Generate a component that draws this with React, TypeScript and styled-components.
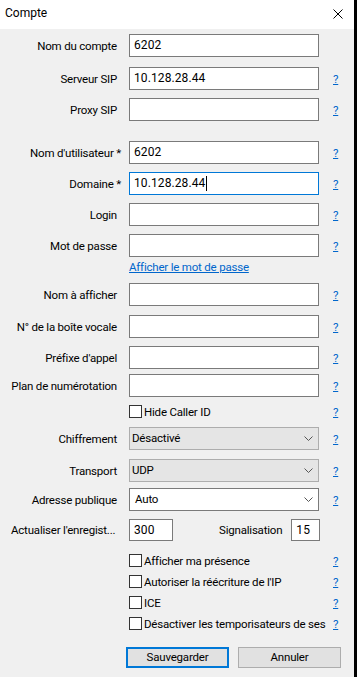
import React from 'react';
import styled, { createGlobalStyle } from 'styled-components';

const GlobalStyle = createGlobalStyle`
  html, body {
    margin: 0;
    padding: 0;
    background: #000;
  }
  body {
    font-family: 'Segoe UI', Roboto, 'Liberation Sans', sans-serif;
    font-size: 11.5px;
    letter-spacing: -0.2px;
    color: #000;
  }
`;

const Screen = styled.div`
  display: flex;
  height: 677px;
  background: #000;
`;

const Dialog = styled.div`
  width: 354px;
  display: flex;
  flex-direction: column;
  background: #f0f0f0;
`;

const TitleBar = styled.div`
  height: 29px;
  flex-shrink: 0;
  box-sizing: border-box;
  display: flex;
  align-items: flex-start;
  justify-content: space-between;
  padding: 5px 11px 0 5px;
  background: #fff;
  line-height: 16px;
  font-size: 12px;
  letter-spacing: 0;
`;

const CloseIcon = styled.svg`
  margin-top: 4px;
`;

const Body = styled.div`
  display: flex;
  flex-direction: column;
  padding-top: 5px;
`;

const Row = styled.div<{ $mt?: number; $h?: number }>`
  display: flex;
  align-items: center;
  height: ${(p) => p.$h ?? 23}px;
  margin-top: ${(p) => p.$mt ?? 0}px;
`;

const Label = styled.div<{ $req?: boolean }>`
  width: 129px;
  flex-shrink: 0;
  box-sizing: border-box;
  padding-right: ${(p) => (p.$req ? 8 : 12)}px;
  text-align: right;
  white-space: nowrap;
`;

const ShortLabel = styled.div`
  width: 129px;
  flex-shrink: 0;
  box-sizing: border-box;
  padding-left: 11px;
  white-space: nowrap;
`;

const TextBox = styled.div<{ $focus?: boolean; $w?: number }>`
  width: ${(p) => p.$w ?? 190}px;
  height: 100%;
  box-sizing: border-box;
  display: flex;
  align-items: center;
  padding: 0 4px 1px;
  background: #fff;
  border: 1px solid ${(p) => (p.$focus ? '#0078d7' : '#7a7a7a')};
  white-space: nowrap;
  font-size: 12px;
  letter-spacing: 0.1px;
`;

const Caret = styled.span`
  display: inline-block;
  width: 1px;
  height: 15px;
  margin-left: 1px;
  background: #000;
`;

const Combo = styled.div<{ $editable?: boolean }>`
  width: 190px;
  height: 100%;
  box-sizing: border-box;
  display: flex;
  align-items: center;
  padding: 0 5px 1px ${(p) => (p.$editable ? 5 : 2)}px;
  background: ${(p) => (p.$editable ? '#fff' : '#e5e5e5')};
  border: 1px solid ${(p) => (p.$editable ? '#7a7a7a' : '#adadad')};
`;

const Chevron = styled.svg`
  margin-left: auto;
`;

const Help = styled.a<{ $ml?: number }>`
  margin-left: ${(p) => p.$ml ?? 14}px;
  color: #0066cc;
  text-decoration: underline;
  cursor: pointer;
`;

const LinkRow = styled.a`
  margin-left: 129px;
  color: #0066cc;
  text-decoration: underline;
  cursor: pointer;
`;

const CheckField = styled.div`
  width: 196px;
  margin-left: 129px;
  display: flex;
  align-items: center;
  gap: 2px;
  white-space: nowrap;
`;

const Box = styled.span`
  width: 13px;
  height: 13px;
  flex-shrink: 0;
  box-sizing: border-box;
  border: 1px solid #333;
  background: #fff;
`;

const SideLabel = styled.span`
  margin: 0 9px 0 46px;
`;

const Buttons = styled.div`
  display: flex;
  gap: 9px;
  margin: 16px 0 0 126px;
`;

const Button = styled.button<{ $primary?: boolean }>`
  width: 103px;
  height: 21px;
  padding: 0 0 1px;
  font: inherit;
  letter-spacing: inherit;
  color: #000;
  background: #e1e1e1;
  border: ${(p) => (p.$primary ? '2px solid #0078d7' : '1px solid #adadad')};
  cursor: pointer;
`;

const chevron = (
  <Chevron width="9" height="5" viewBox="0 0 9 5">
    <polyline points="0.5,0.5 4.5,4.5 8.5,0.5" fill="none" stroke="#555" strokeWidth="1" />
  </Chevron>
);

const Check: React.FC<{ text: string; mt: number }> = ({ text, mt }) => (
  <Row $mt={mt} $h={15}>
    <CheckField>
      <Box />
      <span>{text}</span>
    </CheckField>
    <Help $ml={8}>?</Help>
  </Row>
);

const Field: React.FC<{
  label: string;
  value?: string;
  mt: number;
  req?: boolean;
  help?: boolean;
  focus?: boolean;
}> = ({ label, value, mt, req, help = true, focus }) => (
  <Row $mt={mt}>
    <Label $req={req}>{label}</Label>
    <TextBox $focus={focus}>
      {value}
      {focus && <Caret />}
    </TextBox>
    {help && <Help>?</Help>}
  </Row>
);

const App: React.FC = () => (
  <>
    <GlobalStyle />
    <Screen>
      <Dialog>
        <TitleBar>
          <span>Compte</span>
          <CloseIcon width="10" height="10" viewBox="0 0 10 10">
            <path d="M0.5 0.5 L9.5 9.5 M9.5 0.5 L0.5 9.5" stroke="#000" strokeWidth="1" />
          </CloseIcon>
        </TitleBar>
        <Body>
          <Field label="Nom du compte" value="6202" mt={0} help={false} />
          <Field label="Serveur SIP" value="10.128.28.44" mt={10} />
          <Field label="Proxy SIP" mt={8} />

          <Field label="Nom d'utilisateur *" value="6202" mt={20} req />
          <Field label="Domaine *" value="10.128.28.44" mt={8} req focus />
          <Field label="Login" mt={8} />
          <Field label="Mot de passe" mt={8} />
          <Row $mt={2} $h={16}>
            <LinkRow>Afficher le mot de passe</LinkRow>
          </Row>

          <Field label="Nom à afficher" mt={8} />
          <Field label="N° de la boîte vocale" mt={9} />
          <Field label="Préfixe d'appel" mt={8} />
          <Field label="Plan de numérotation" mt={5} />
          <Check text="Hide Caller ID" mt={7} />

          <Row $mt={8}>
            <Label>Chiffrement</Label>
            <Combo>Désactivé{chevron}</Combo>
            <Help>?</Help>
          </Row>
          <Row $mt={9}>
            <Label>Transport</Label>
            <Combo>UDP{chevron}</Combo>
            <Help>?</Help>
          </Row>
          <Row $mt={6}>
            <Label>Adresse publique</Label>
            <Combo $editable>Auto{chevron}</Combo>
            <Help>?</Help>
          </Row>
          <Row $mt={8} $h={22}>
            <ShortLabel>Actualiser l'enregist...</ShortLabel>
            <TextBox $w={44}>300</TextBox>
            <SideLabel>Signalisation</SideLabel>
            <TextBox $w={29}>15</TextBox>
          </Row>

          <Check text="Afficher ma présence" mt={12} />
          <Check text="Autoriser la réécriture de l'IP" mt={6} />
          <Check text="ICE" mt={6} />
          <Check text="Désactiver les temporisateurs de ses" mt={6} />

          <Buttons>
            <Button $primary>Sauvegarder</Button>
            <Button>Annuler</Button>
          </Buttons>
        </Body>
      </Dialog>
    </Screen>
  </>
);

export default App;
